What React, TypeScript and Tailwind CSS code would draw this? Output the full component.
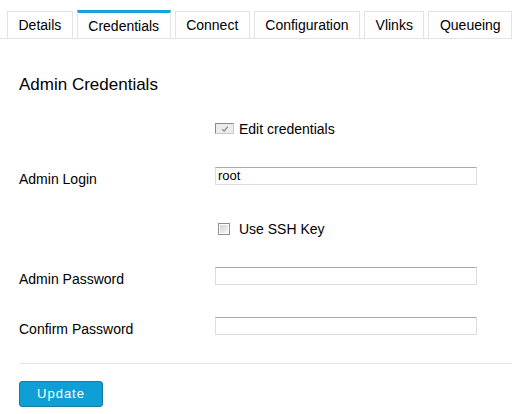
import React from "react";

const tabs = ["Details", "Credentials", "Connect", "Configuration", "Vlinks", "Queueing"];

function Row({ label, children }: { label?: string; children: React.ReactNode }) {
  return (
    <div className="flex h-[50px] items-center">
      <div className="w-[196px] text-[14px] leading-[16px]">{label}</div>
      <div className="flex items-center">{children}</div>
    </div>
  );
}

function TextInput({ value }: { value?: string }) {
  return (
    <div className="mb-[6px] h-[18px] w-[262px] border border-[#dcdcdc] border-t-[#a9a9a9] bg-white pl-[2px] text-[13px] leading-[16px] flex items-center">
      {value}
    </div>
  );
}

export default function App() {
  return (
    <div className="w-[512px] h-[414px] bg-white text-[#000] font-['Liberation_Sans',Arial,sans-serif] overflow-hidden">
      <div className="flex gap-[4px] pl-[7px] pt-[10px] border-b border-[#e3e3e3]">
        {tabs.map((t) => {
          const active = t === "Credentials";
          return (
            <div
              key={t}
              className={
                active
                  ? "h-[28px] -mb-px px-[10.5px] border-x border-[#e3e3e3] border-t-[3px] border-t-[#17a2d9] bg-white flex items-center pt-[1px] text-[14px]"
                  : "h-[27px] mt-[1px] px-[10.5px] border-x border-t border-[#e3e3e3] bg-white flex items-center pt-[1px] text-[14px]"
              }
            >
              {t}
            </div>
          );
        })}
      </div>
      <div className="pl-[19px]">
        <h2 className="mt-[36px] text-[17px] leading-[20px] font-normal">Admin Credentials</h2>
        <div className="mt-[9px]">
          <Row>
            <span className="relative mb-[2px] inline-block h-[11px] w-[19px] border border-[#c8c8c8] border-t-[#8a8a8a] border-l-[#8a8a8a] bg-[#ececec]">
              <svg viewBox="0 0 10 10" className="absolute left-[5px] top-[1px] h-[8px] w-[8px]">
                <path d="M1.5 5.2 L4 7.5 L8.5 2" fill="none" stroke="#8c8c8c" strokeWidth="1.6" />
              </svg>
            </span>
            <span className="ml-[5px] text-[14px] leading-[16px]">Edit credentials</span>
          </Row>
          <Row label="Admin Login">
            <TextInput value="root" />
          </Row>
          <Row>
            <span className="ml-[3px] inline-block h-[12px] w-[12px] border border-[#8f8f8f] p-px bg-white">
              <span className="block h-full w-full bg-gradient-to-br from-[#d4d4d4] to-[#f7f7f7]" />
            </span>
            <span className="ml-[9px] text-[14px] leading-[16px]">Use SSH Key</span>
          </Row>
          <Row label="Admin Password">
            <TextInput />
          </Row>
          <Row label="Confirm Password">
            <TextInput />
          </Row>
        </div>
        <div className="mt-[9px] border-t border-[#e5e5e5]" />
        <button className="mt-[17px] h-[26px] w-[84px] rounded-[3px] border border-[#1a7aa0] bg-[#0f9fd7] text-[13px] tracking-[1px] text-white flex items-center justify-center">
          Update
        </button>
      </div>
    </div>
  );
}
